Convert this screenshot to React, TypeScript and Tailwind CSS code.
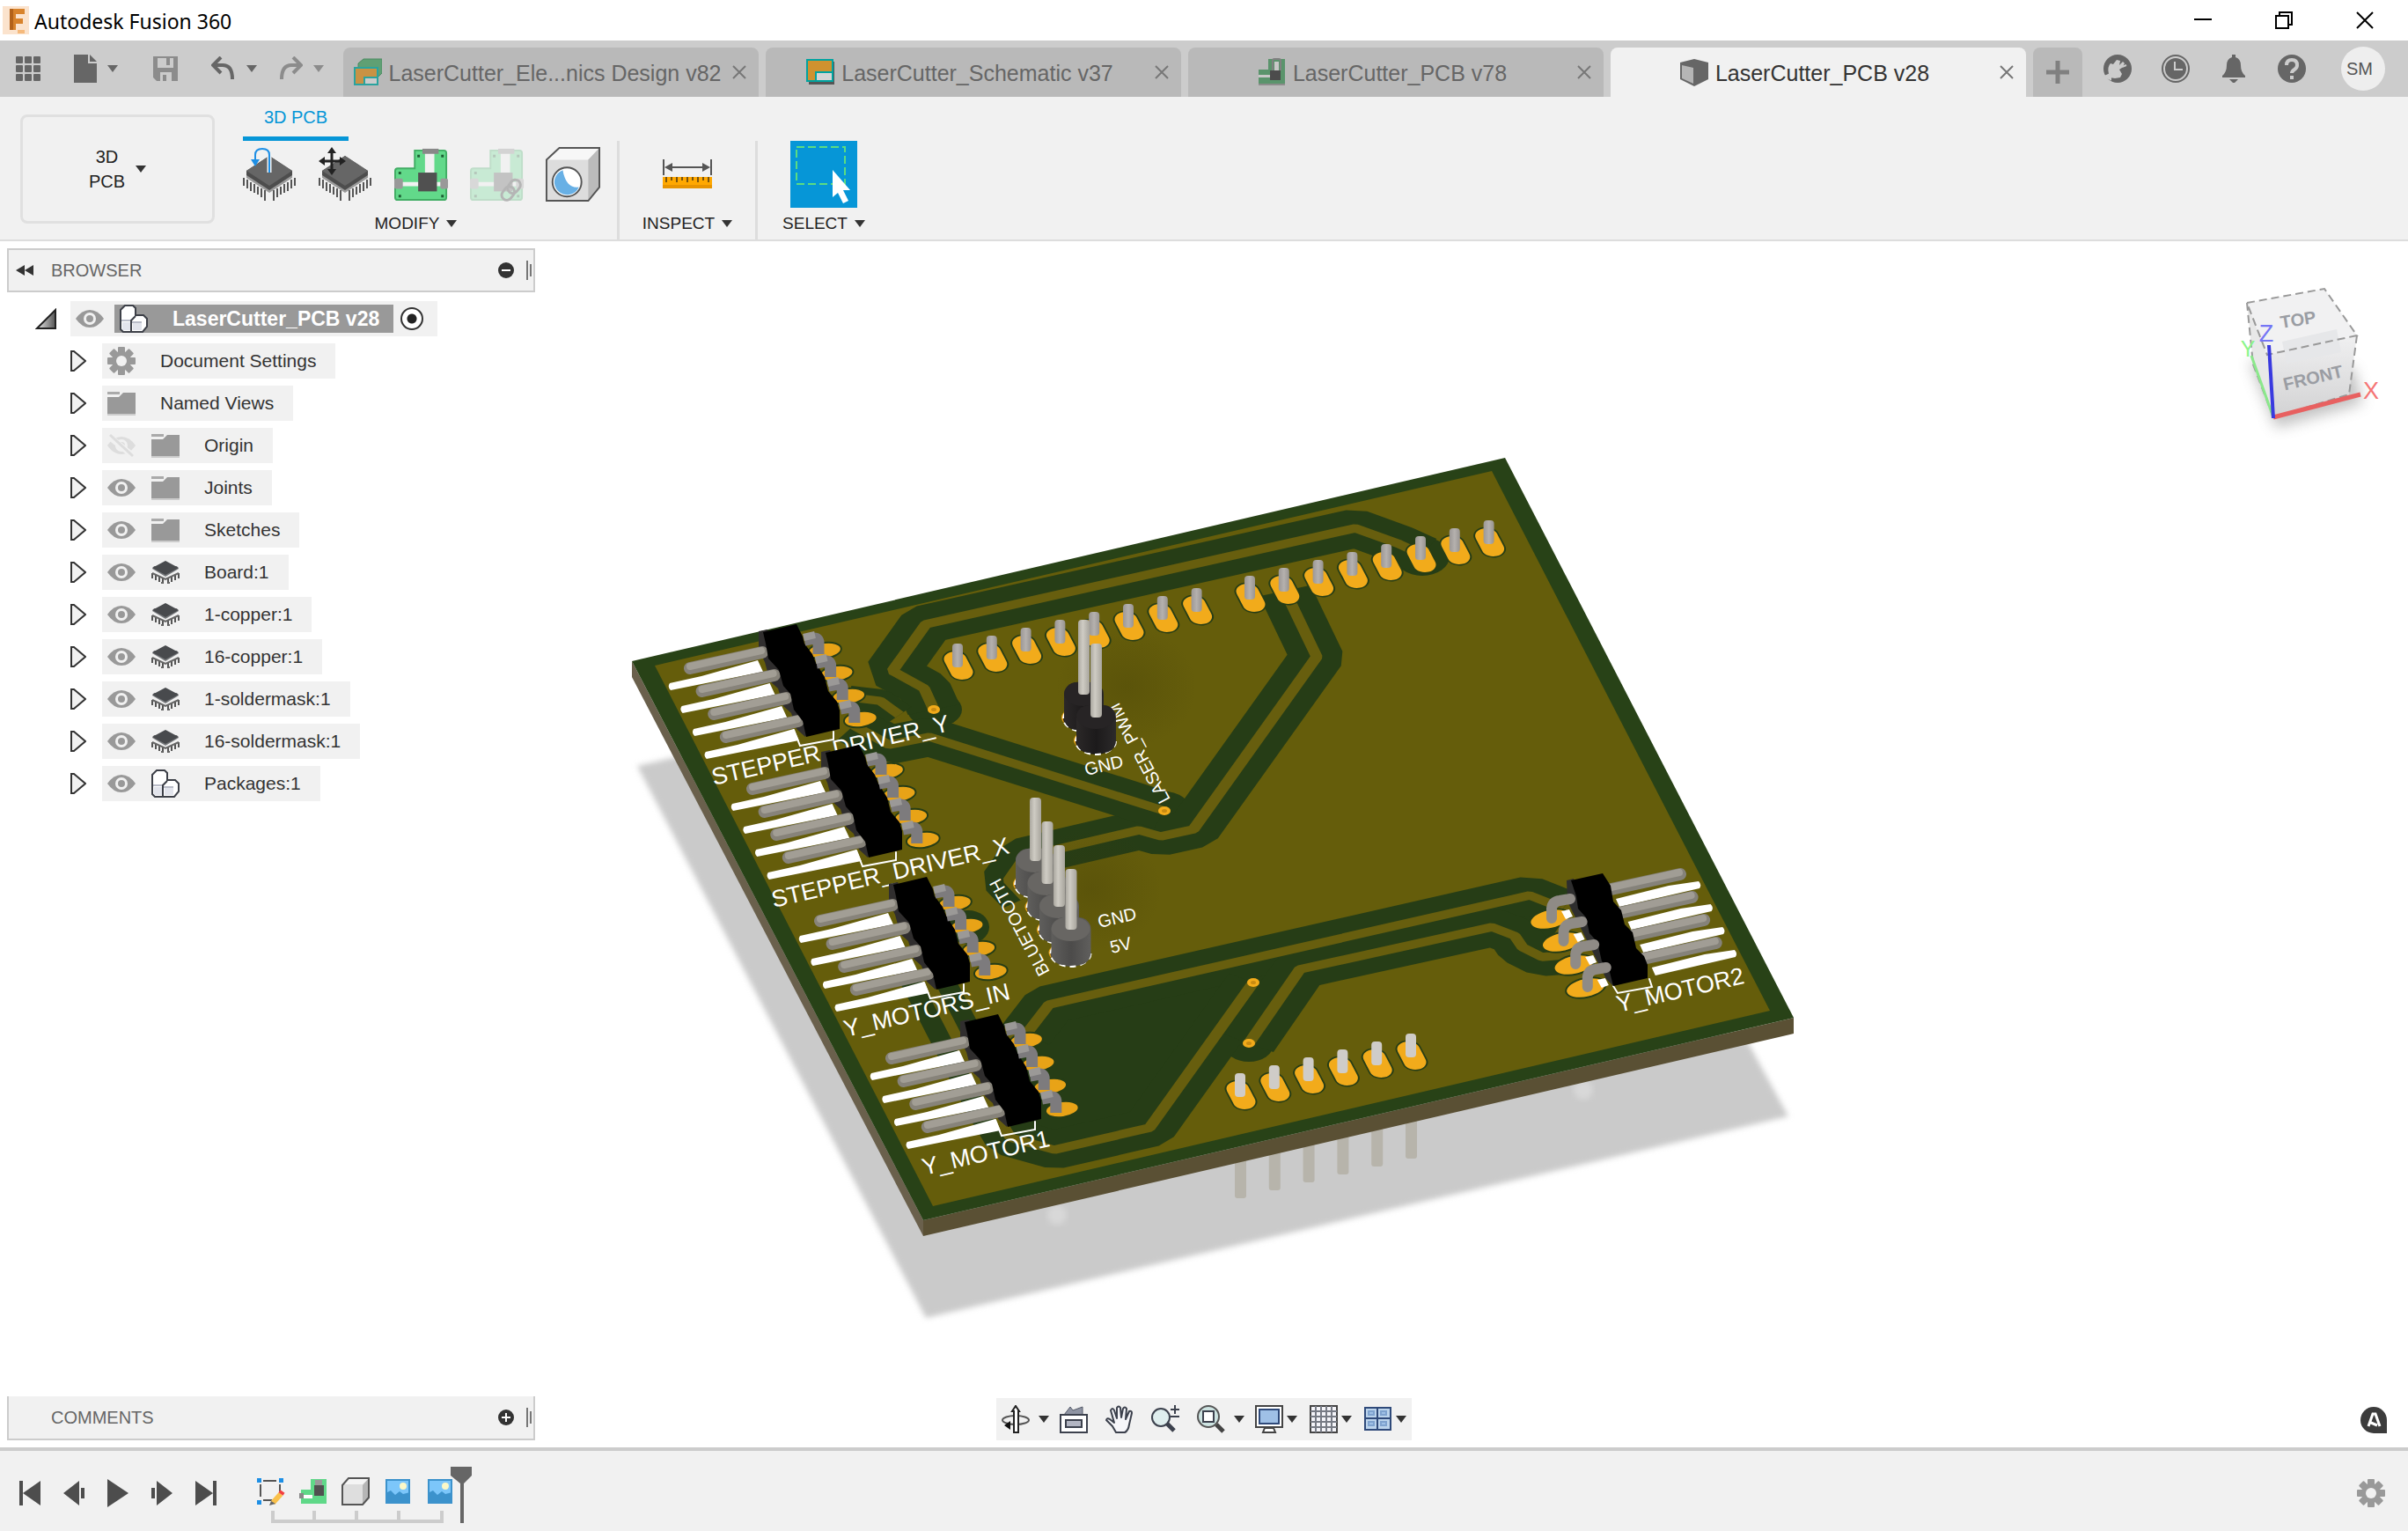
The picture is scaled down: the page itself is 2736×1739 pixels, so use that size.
import React from 'react';

type Pt = [number, number];

const TABS = [
  { id: 'design', title: 'LaserCutter_Ele...nics Design v82', active: false },
  { id: 'schematic', title: 'LaserCutter_Schematic v37', active: false },
  { id: 'board', title: 'LaserCutter_PCB v78', active: false },
  { id: 'cube', title: 'LaserCutter_PCB v28', active: true },
];

const TREE = [
  { label: 'Document Settings', eye: 'none', icon: 'gear' },
  { label: 'Named Views', eye: 'none', icon: 'folder' },
  { label: 'Origin', eye: 'off', icon: 'folder' },
  { label: 'Joints', eye: 'on', icon: 'folder' },
  { label: 'Sketches', eye: 'on', icon: 'folder' },
  { label: 'Board:1', eye: 'on', icon: 'chip' },
  { label: '1-copper:1', eye: 'on', icon: 'chip' },
  { label: '16-copper:1', eye: 'on', icon: 'chip' },
  { label: '1-soldermask:1', eye: 'on', icon: 'chip' },
  { label: '16-soldermask:1', eye: 'on', icon: 'chip' },
  { label: 'Packages:1', eye: 'on', icon: 'blocks' },
];

/* ---------- small icons ---------- */

const Caret = ({ className = 'text-[#333333]' }: { className?: string }) => (
  <svg className={`h-2 w-3 shrink-0 ${className}`} viewBox="0 0 12 8"><path d="M0 0h12L6 8z" fill="currentColor" /></svg>
);

const GearIcon = () => (
  <svg className="size-8 shrink-0 text-[#999999]" viewBox="0 0 32 32">
    {[0, 45, 90, 135].map((a) => (
      <rect key={a} x="12" y="0" width="8" height="32" rx="1" fill="currentColor" transform={`rotate(${a} 16 16)`} />
    ))}
    <circle cx="16" cy="16" r="11" fill="currentColor" />
    <circle cx="16" cy="16" r="6" fill="#f1f1f1" />
  </svg>
);

const FolderIcon = () => (
  <svg className="size-8 shrink-0" viewBox="0 0 32 32">
    <path d="M0 3h14v3H0z" fill="#aaaaaa" />
    <path d="M0 9h13l5-5h14v24H0z" fill="#999999" />
    <path d="M0 28h32v2H0z" fill="#cccccc" />
  </svg>
);

const EyeIcon = ({ off = false }: { off?: boolean }) => (
  <svg className={off ? 'size-8 shrink-0 text-[#dddddd]' : 'size-8 shrink-0 text-[#999999]'} viewBox="0 0 32 32">
    <path d="M0 16Q7 6 16 6t16 10q-7 10-16 10T0 16z" fill="currentColor" />
    <circle cx="16" cy="16" r="7" fill="#f1f1f1" />
    <circle cx="16" cy="16" r="4" fill="currentColor" />
    {off && <path d="M1 5l27 22" stroke="#f1f1f1" strokeWidth="7" />}
    {off && <path d="M3 4l26 24" stroke="currentColor" strokeWidth="3" />}
  </svg>
);

const BlocksIcon = () => (
  <svg className="size-8 shrink-0" viewBox="0 0 32 32">
    <path d="M1 6l5-5h9l3 3v8h9l4 4v9l-5 6H4l-3-3z" fill="#ffffff" stroke="#3d4048" strokeWidth="2" />
    <path d="M2 18h11M13 20h12" stroke="#b9bcc8" strokeWidth="2" fill="none" />
    <path d="M3 20h9v9H3zM15 21h10v8H15z" fill="#e2e4ec" />
    <path d="M13 30V18l5-5" stroke="#3d4048" strokeWidth="2" fill="none" />
  </svg>
);

const ChipShape = () => (
  <g>
    <path d="M1 36v9M5 38v10M9 41v10M13 43v10M17 46v9M21 48v10M25 50v12M35 50v12M39 48v10M43 46v9M47 43v10M51 41v10M55 38v10M59 36v9" stroke="#555555" strokeWidth="2" />
    <path d="M4 31l26 17 26-17v5L30 53 4 36z" fill="#9a9a9a" />
    <path d="M4 28L30 11l26 17v5L30 50 4 33z" fill="#4d4d4d" />
    <path d="M4 28L30 11l26 17-26 17z" fill="#666666" />
  </g>
);

const SmallChip = () => (
  <svg className="size-8 shrink-0" viewBox="0 0 32 32">
    <path d="M1 17v6M5 19v6M9 21v6M13 23v6M19 23v6M23 21v6M27 19v6M31 17v6" stroke="#555555" strokeWidth="2" />
    <path d="M1 17l15 7 15-7M13 28h-2M19 28h2" stroke="#666666" strokeWidth="2" fill="none" />
    <path d="M1 12l15 9 15-9-2-3H3z" fill="#77797c" />
    <path d="M1 11L16 3l15 8-15 8z" fill="#484a4d" />
  </svg>
);

const BoardShape = () => (
  <g>
    <path d="M24 4h34q3 0 3 3v52q0 3-3 3H4q-3 0-3-3V28q0-3 3-3h20z" fill="#62d98a" stroke="#41ad64" strokeWidth="2" />
    <path d="M36 6h11v24H36zM4 41h56v5H4z" fill="#f1f1f1" />
    <path d="M33 2h19v6H33z" fill="#888888" />
    <rect x="0" y="37" width="10" height="12" rx="2" fill="#999999" />
    <rect x="54" y="37" width="9" height="12" rx="2" fill="#999999" />
    <path d="M28 30h22v22H28z" fill="#505050" />
    <path d="M27 9h3v3h-3zM55 9h3v3h-3zM5 29h3v3H5zM5 56h3v3H5zM55 56h3v3h-3z" fill="#1e5e34" />
  </g>
);

const TabIcon = ({ id }: { id: string }) => (
  <svg className="size-8 shrink-0" viewBox="0 0 32 32">
    {id === 'design' && (
      <g>
        <path d="M5 6l6-5h21v16l-5 5H5z" fill="#5fa074" stroke="#4a8a60" />
        <path d="M1 11h26v19H1z" fill="#c99244" stroke="#2aa39f" strokeWidth="2" />
        <path d="M12 22h15v8H12z" fill="#cccccc" stroke="#2aa39f" strokeWidth="2" />
      </g>
    )}
    {id === 'schematic' && (
      <g>
        <path d="M3 4h29v26H3z" fill="#555555" />
        <path d="M1 2h29v24H1z" fill="#cf922f" stroke="#00a3a0" strokeWidth="2" />
        <path d="M11 16h19v10H11z" fill="#d5d5d5" stroke="#00a3a0" strokeWidth="2" />
      </g>
    )}
    {id === 'board' && (
      <g>
        <path d="M12 1h19v29H1V13h11z" fill="#5a946c" />
        <path d="M19 4h5v10h-5z" fill="#c8c8c8" />
        <path d="M17 14V3q0-2 2-2h5q2 0 2 2v11" fill="none" stroke="#808080" strokeWidth="2" />
        <path d="M1 19h14v3H1z" fill="#c8c8c8" />
        <path d="M14 14h12v11H14z" fill="#4c4c4c" />
        <path d="M1 30h30" stroke="#8c8c8c" strokeWidth="2" />
      </g>
    )}
    {id === 'cube' && (
      <g>
        <path d="M0 5l16-4 16 4v19l-16 8L0 24z" fill="#666666" />
        <path d="M2 8l13 3v18L2 23z" fill="#b5b5b5" />
      </g>
    )}
  </svg>
);

const CloseIcon = () => (
  <svg className="size-[18px]" viewBox="0 0 18 18"><path d="M2 2l14 14M16 2L2 16" stroke="#777777" strokeWidth="2" /></svg>
);

/* ---------- window chrome ---------- */

const TitleBar = () => (
  <header className="flex h-[46px] items-center bg-white pl-[3px]">
    <svg className="h-8 w-[30px]" viewBox="0 0 30 32">
      <rect width="30" height="32" fill="#fbe3cd" />
      <path d="M8 3h17v6H15v5h8v6h-8v7H8z" fill="#d8832c" />
      <path d="M8 3h4v24H8z" fill="#b3621a" />
      <path d="M17 27h8v4h-8z" fill="#f5b97b" />
    </svg>
    <h1 className="ml-[6px] flex-1 pt-[2px] font-['Noto_Sans',sans-serif] text-[23px] text-black">Autodesk Fusion 360</h1>
    <button aria-label="Minimize" className="flex h-full w-[92px] items-center justify-center">
      <svg className="size-5" viewBox="0 0 20 20"><path d="M0 9h20" stroke="#000" strokeWidth="2" /></svg>
    </button>
    <button aria-label="Restore" className="flex h-full w-[92px] items-center justify-center">
      <svg className="size-5" viewBox="0 0 20 20"><path d="M1 5h14v14H1zM5 5V1h14v14h-4" stroke="#000" strokeWidth="2" fill="none" /></svg>
    </button>
    <button aria-label="Close" className="mr-[3px] flex h-full w-[92px] items-center justify-center">
      <svg className="size-5" viewBox="0 0 20 20"><path d="M1 1l18 18M19 1L1 19" stroke="#000" strokeWidth="2" /></svg>
    </button>
  </header>
);

const TabBar = () => (
  <div className="flex h-16 bg-[#cccccc]">
    <div className="flex w-[390px] shrink-0 items-center pl-[18px] text-[#666666]">
      <button aria-label="Data panel">
        <svg className="size-7" viewBox="0 0 28 28" fill="currentColor">
          {[0, 10, 20].map((y) => [0, 10, 20].map((x) => <rect key={`${x}-${y}`} x={x} y={y} width="8" height="8" rx="1" />))}
        </svg>
      </button>
      <button aria-label="File" className="ml-[38px] flex items-center gap-3">
        <svg className="h-8 w-[26px]" viewBox="0 0 26 32" fill="currentColor"><path d="M0 0h16v10h10v22H0zM18 0l8 8h-8z" /></svg>
        <Caret className="text-[#666666]" />
      </button>
      <button aria-label="Save" className="ml-[40px] text-[#8c8c8c]">
        <svg className="size-7" viewBox="0 0 28 28">
          <path d="M0 0h28v28H4l-4-4z" fill="currentColor" />
          <path d="M5 2h18v11H5zM8 18h13v10H8z" fill="#cccccc" />
          <path d="M15 2h4v8h-4zM11 21h4v7h-4z" fill="currentColor" />
        </svg>
      </button>
      <button aria-label="Undo" className="ml-[38px] flex items-center gap-3">
        <svg className="size-7" viewBox="0 0 28 28" fill="none"><path d="M2 10h11q11 0 11 16" stroke="currentColor" strokeWidth="4" /><path d="M11 1L2 10l9 9" stroke="currentColor" strokeWidth="4" /></svg>
        <Caret className="text-[#666666]" />
      </button>
      <button aria-label="Redo" className="ml-6 flex items-center gap-3 text-[#8c8c8c]">
        <svg className="size-7" viewBox="0 0 28 28" fill="none"><path d="M26 10H15Q4 10 4 26" stroke="currentColor" strokeWidth="4" /><path d="M17 1l9 9-9 9" stroke="currentColor" strokeWidth="4" /></svg>
        <Caret className="text-[#8c8c8c]" />
      </button>
    </div>

    <nav className="flex min-w-0 flex-1 gap-2 pt-2">
      {TABS.map((tab) => (
        <div key={tab.id} className={`flex min-w-0 flex-1 items-center rounded-t-lg ${tab.active ? 'bg-[#f1f1f1] text-[#333333]' : 'bg-[#b9b9b9] text-[#666666]'}`}>
          <button className="flex min-w-0 flex-1 items-center justify-center gap-2 whitespace-nowrap text-[25px]">
            <TabIcon id={tab.id} />
            <span className="pt-[3px]">{tab.title}</span>
          </button>
          <button aria-label={`Close ${tab.title}`} className="mr-[13px]"><CloseIcon /></button>
        </div>
      ))}
    </nav>

    <div className="flex w-[434px] shrink-0 pl-2">
      <button aria-label="New tab" className="mt-2 flex w-14 items-center justify-center rounded-t-lg bg-[#b9b9b9]">
        <svg className="size-[26px]" viewBox="0 0 26 26"><path d="M13 0v26M0 13h26" stroke="#808080" strokeWidth="5" /></svg>
      </button>
      <div className="ml-6 flex items-center gap-[34px] text-[#666666]">
        <button aria-label="Extensions">
          <svg className="size-8" viewBox="0 0 32 32">
            <circle cx="16" cy="16" r="16" fill="currentColor" />
            <path d="M6 22q-2-8 2-12l3 1 4-5 4 1-1 5 4-4 2 2-3 5-3 2 3 5-2 4-6 1-6-1z" fill="#cccccc" />
            <path d="M1 25l7 3v-6zM21 14l5-2" fill="#cccccc" stroke="#cccccc" strokeWidth="2" />
          </svg>
        </button>
        <button aria-label="Job status">
          <svg className="size-8" viewBox="0 0 32 32">
            <circle cx="16" cy="16" r="15" fill="none" stroke="currentColor" strokeWidth="2" />
            <circle cx="16" cy="16" r="12" fill="currentColor" />
            <path d="M15 8v9h9" stroke="#cccccc" strokeWidth="2" fill="none" />
          </svg>
        </button>
        <button aria-label="Notifications">
          <svg className="size-8" viewBox="0 0 32 32" fill="currentColor"><path d="M14 0h4v3q6 2 6 9 0 8 5 12v2H3v-2q5-4 5-12 0-7 6-9zM11 28h10l-4 4h-2z" /></svg>
        </button>
        <button aria-label="Help">
          <svg className="size-8" viewBox="0 0 32 32">
            <circle cx="16" cy="16" r="16" fill="currentColor" />
            <path d="M10 12q0-6 6-6t6 6q0 3-3 5t-3 4" stroke="#cccccc" strokeWidth="4" fill="none" />
            <path d="M14 24h4v4h-4z" fill="#cccccc" />
          </svg>
        </button>
        <button className="ml-[6px] size-[50px] rounded-full bg-[#eeeeee] pr-2 text-[20px] text-[#555555]">SM</button>
      </div>
    </div>
  </div>
);

const PanelLabel = ({ children }: { children: React.ReactNode }) => (
  <button className="flex h-9 items-center justify-center gap-2 text-[19px] text-[#222222]">{children}<Caret /></button>
);

const Ribbon = () => (
  <section className="flex h-[164px] border-b-2 border-[#dddddd] bg-[#f1f1f1] pl-[23px]">
    <button className="mt-5 flex h-[124px] w-[221px] shrink-0 items-center justify-center gap-3 rounded-lg border-[3px] border-[#e0e0e0] text-[20px] leading-7 text-[#222222]">
      <span>3D<br />PCB</span>
      <Caret />
    </button>
    <div className="ml-8">
      <button className="block h-[50px] w-[120px] border-b-[5px] border-[#0696d7] text-[20px] text-[#0696d7]">3D PCB</button>
      <div className="flex">
        <div className="flex w-[425px] flex-col">
          <div className="flex h-[76px] items-center gap-6">
            <button aria-label="Push package">
              <svg className="h-16 w-[62px]" viewBox="0 0 62 64">
                <ChipShape />
                <path d="M30 30V10q0-7-8-7t-8 7v7" stroke="#f1f1f1" strokeWidth="5" fill="none" />
                <path d="M30 30V10q0-7-8-7t-8 7v7" stroke="#1e8fe5" strokeWidth="2" fill="none" />
                <path d="M9 15h10l-5 8z" fill="#1e8fe5" />
              </svg>
            </button>
            <button aria-label="Move package">
              <svg className="h-16 w-[62px]" viewBox="0 0 62 64">
                <ChipShape />
                <path d="M15 4v26M3 17h24" stroke="#222222" strokeWidth="3" />
                <path d="M15 1l5 7H10zM15 33l5-7H10zM0 17l7-5v10zM31 17l-7-5v10z" fill="#222222" />
              </svg>
            </button>
            <button aria-label="Push to board"><svg className="h-16 w-[62px]" viewBox="0 0 64 64"><BoardShape /></svg></button>
            <button aria-label="Link board" disabled>
              <svg className="h-16 w-[62px]" viewBox="0 0 64 64">
                <g opacity="0.28"><BoardShape /></g>
                <g fill="none" stroke="#b5b5b5" strokeWidth="3">
                  <rect x="46" y="38" width="12" height="17" rx="6" transform="rotate(38 52 46)" />
                  <rect x="39" y="46" width="12" height="17" rx="6" transform="rotate(38 45 54)" />
                </g>
              </svg>
            </button>
            <button aria-label="Appearance">
              <svg className="h-16 w-[62px]" viewBox="0 0 64 64">
                <path d="M1 15L16 1h47v46L50 63H1z" fill="#dddddd" />
                <path d="M1 15L16 1h47L50 15z" fill="#f7f7f7" />
                <path d="M50 15L63 1v46L50 63z" fill="#bbbbbb" />
                <path d="M1 15L16 1h47v46L50 63H1z" fill="none" stroke="#555555" strokeWidth="2" />
                <circle cx="25" cy="41" r="17" fill="#ffffff" stroke="#555555" strokeWidth="2" />
                <path d="M20 27a15 15 0 1 0 19 20q-15 2-19-20z" fill="#68b0e5" />
              </svg>
            </button>
          </div>
          <div className="mr-8 flex justify-center"><PanelLabel>MODIFY</PanelLabel></div>
        </div>
        <div className="flex w-[160px] flex-col border-x-[3px] border-[#dddddd]">
          <button aria-label="Measure" className="flex h-[76px] items-center justify-center">
            <svg className="h-16 w-14" viewBox="0 0 56 64">
              <path d="M1 15v18M55 15v18M5 24h46" stroke="#555555" strokeWidth="2" />
              <path d="M2 24l9-5v10zM54 24l-9-5v10z" fill="#555555" />
              <path d="M0 35h56v13H0z" fill="#ffa800" />
              <path d="M0 44h56v4H0z" fill="#e89400" />
              <path d="M4 35v6M10 35v4M16 35v6M22 35v4M28 35v6M34 35v4M40 35v6M46 35v4M52 35v6" stroke="#77520c" strokeWidth="2" />
            </svg>
          </button>
          <PanelLabel>INSPECT</PanelLabel>
        </div>
        <div className="flex w-[150px] flex-col items-center">
          <button aria-label="Select" className="size-[76px] bg-[#0696d7]">
            <svg viewBox="0 0 76 76">
              <path d="M7 7h55v42H7z" fill="none" stroke="#5bdc82" strokeWidth="2" strokeDasharray="9 4" />
              <path d="M48 33v31l6-5 6 12 6-3-6-12h8z" fill="#ffffff" />
            </svg>
          </button>
          <PanelLabel>SELECT</PanelLabel>
        </div>
      </div>
    </div>
  </section>
);

/* ---------- board drawing ---------- */

// Board plane: u runs along the long edge, v along the left edge.
const U: Pt = [1.2605, -0.2935];
const V: Pt = [0.4649, 0.8919];
const PLANE = `matrix(${U[0]} ${U[1]} ${V[0]} ${V[1]} 0 0)`;

const toPlane = ([x, y]: Pt): Pt => {
  const det = U[0] * V[1] - V[0] * U[1];
  return [(x * V[1] - y * V[0]) / det, (y * U[0] - x * U[1]) / det];
};
const line = (pts: Pt[]) => pts.map((p) => toPlane(p).map((n) => n.toFixed(1)).join(',')).join(' ');

const TRACES: Pt[][] = [
  [[1616, 630], [1590, 618], [1540, 600], [1052, 709], [1014, 762], [1050, 782], [1061, 806]],
  [[1460, 671], [1496, 746], [1356, 942], [1319, 950], [1294, 943], [1165, 973], [1146, 1000], [1165, 1020]],
  [[1323, 921], [1056, 837], [1010, 846], [970, 824]],
  [[965, 792], [1000, 796], [1022, 812]],
  [[1776, 1032], [1738, 1017], [1192, 1141], [1165, 1176]],
  [[1424, 1116], [1306, 1281], [1198, 1306], [1148, 1292], [1130, 1262], [1052, 1110]],
  [[1419, 1185], [1477, 1101], [1695, 1053], [1721, 1063], [1730, 1076], [1752, 1087], [1790, 1084]],
];

const VIAS: Pt[] = [[1061, 806], [1323, 921], [1424, 1116], [1419, 1185]];

const row = (x: number, y: number, n: number): Pt[] => Array.from({ length: n }, (_, i) => [x + i * 38.8, y - i * 9]);
const TOP_PADS = [...row(1088, 756, 8), ...row(1420, 679, 8)];
const BOTTOM_PADS = row(1409, 1244, 6);

const Pad = ({ at, pin }: { at: Pt; pin: string }) => {
  const [u, v] = toPlane([at[0] + 1, at[1]]);
  return (
    <g>
      <g transform={PLANE} strokeLinecap="round">
        <path d={`M${u} ${v - 8}v16`} stroke="#263d16" strokeWidth="22" />
        <path d={`M${u} ${v - 8}v16`} stroke="#f2ab1b" strokeWidth="19" />
      </g>
      <rect x={at[0] - 6} y={at[1] - 25} width="12" height="27" rx="4" fill={pin} />
    </g>
  );
};

const STEPS = [0, 1, 2, 3];

// Four-way right-angle header on the left edge, pins pointing outwards
const LeftHeader = ({ dx, dy }: { dx: number; dy: number }) => (
  <g transform={`translate(${dx} ${dy})`} strokeLinecap="round">
    {STEPS.map((i) => (
      <g key={i} transform={`translate(${i * 13.6} ${i * 26})`}>
        <ellipse cx="937" cy="739" rx="20" ry="10" fill="#263d16" transform="rotate(-8 937 739)" />
        <ellipse cx="937" cy="739" rx="18" ry="8" fill="#e8a317" transform="rotate(-8 937 739)" />
        <path d="M762 784q-4-4-1-8l36-8 64-18 6 13z" fill="#ffffff" />
      </g>
    ))}
    <path d="M902 829l7 18 38-7v-9" stroke="#ffffff" strokeWidth="2" fill="none" />
    <path d="M862 717l10-2 50 110-7 12-10-9-6-18-9-8-6-20-9-8-6-22-7-14z" fill="#302e2e" />
    {STEPS.map((i) => (
      <g key={i} transform={`translate(${i * 13.6} ${i * 26})`}>
        <path d="M784 759l82-18" stroke="#87837a" strokeWidth="14" />
        <path d="M784 757l81-18" stroke="#a29e95" strokeWidth="8" />
      </g>
    ))}
    <path d="M867 718l38-9 7 14 2 8 9 12 4 10 10 16 4 16 10 12 3 10v21l-38 9-4-18-10-13-4-18-8-9-5-18-12-13-3-17z" fill="#000000" />
    {STEPS.map((i) => (
      <g key={i} transform={`translate(${i * 13.6} ${i * 26})`} fill="none" strokeLinecap="butt" strokeLinejoin="round">
        <path d="M914 727l11-2q5 0 5 5v13" stroke="#7d7b7d" strokeWidth="13" />
        <path d="M913 724l13-3" stroke="#9b9997" strokeWidth="8" />
      </g>
    ))}
  </g>
);

const RightHeader = () => (
  <g strokeLinecap="round">
    {STEPS.map((i) => (
      <g key={i} transform={`translate(${i * 13.6} ${i * 26})`}>
        <ellipse cx="1761" cy="1044" rx="24" ry="12" fill="#263d16" transform="rotate(-12 1761 1044)" />
        <ellipse cx="1761" cy="1044" rx="22" ry="10" fill="#f2ab1b" transform="rotate(-12 1761 1044)" />
        <path d="M1774 1035l9-2 4 8-8 3z" fill="#ffffff" />
        <path d="M1840 1030l-4-9 60-15 34-5q4 4 1 8z" fill="#ffffff" />
      </g>
    ))}
    <path d="M1833 1120l5 8 39-7-3-9" stroke="#ffffff" strokeWidth="2" fill="none" />
    <path d="M1780 1000l8-2 45 104v18l-8-8-44-88z" fill="#2e2e2e" />
    {STEPS.map((i) => (
      <g key={i} transform={`translate(${i * 13.6} ${i * 26})`}>
        <path d="M1826 1011l83-18" stroke="#85827a" strokeWidth="14" />
        <path d="M1826 1009l82-18" stroke="#a19d95" strokeWidth="8" />
      </g>
    ))}
    <path d="M1785 1000l36-8 9 14 3 18 9 10 4 16 9 9 4 18 9 9 4 10v15l-39 9-5-20-8-8-5-22-9-10-4-18-9-10-2-14z" fill="#000000" />
    {STEPS.map((i) => (
      <path key={i} transform={`translate(${i * 13.6} ${i * 26})`} d="M1784 1021l-12 2q-8 1-9 9v11" stroke="#8f8b86" strokeWidth="12" fill="none" />
    ))}
  </g>
);

// Upright header post: cx is the pin centre, base is where the pin meets the body
const Post = ({ cx, top, base, dark }: { cx: number; top: number; base: number; dark: boolean }) => (
  <g>
    <ellipse cx={cx - 4} cy={base + 26} rx="21" ry="12" fill="#e8a317" />
    <ellipse cx={cx} cy={base + 27} rx="23" ry="15" fill={dark ? '#1a1919' : '#504f4e'} stroke="#ffffff" strokeWidth="2" strokeDasharray="7 5" />
    <rect x={cx - 22} y={base - 14} width="45" height="54" rx="14" fill={dark ? 'url(#bodyDark)' : 'url(#bodyGrey)'} />
    <ellipse cx={cx} cy={base - 1} rx="22" ry="14" fill={dark ? '#272425' : '#686663'} />
    <rect x={cx - 6} y={top} width="13" height={base - top} rx="4" fill="url(#pin)" />
  </g>
);

const SILK = [
  { text: 'STEPPER_DRIVER_Y', x: 811, y: 892, angle: -13, size: 27 },
  { text: 'STEPPER_DRIVER_X', x: 879, y: 1031, angle: -13, size: 27 },
  { text: 'Y_MOTORS_IN', x: 961, y: 1178, angle: -13, size: 27 },
  { text: 'Y_MOTOR1', x: 1050, y: 1335, angle: -13, size: 27 },
  { text: 'Y_MOTOR2', x: 1839, y: 1150, angle: -13, size: 27 },
  { text: 'GND', x: 1234, y: 881, angle: -13, size: 20 },
  { text: 'GND', x: 1249, y: 1054, angle: -13, size: 20 },
  { text: '5V', x: 1263, y: 1083, angle: -13, size: 20 },
  { text: 'LASER_PWM', x: 1330, y: 908, angle: -118, size: 20 },
  { text: 'BLUETOOTH', x: 1193, y: 1104, angle: -118, size: 20 },
];

const ViewCube = () => (
  <g>
    <path d="M2556 410l30 76 98-28-10-40z" fill="#777777" opacity="0.45" filter="url(#soft)" />
    <path d="M2553 344l23 59 7 71-23-60z" fill="#e8e8e8" />
    <path d="M2553 344l88-16 37 53-102 22z" fill="#f1f1f2" />
    <path d="M2576 403l102-22-9 67-86 26z" fill="url(#cubeFront)" />
    <path d="M2593 388l62-14 5 26-62 13z" fill="#e6e7e9" />
    <path d="M2553 344l88-16 37 53-102 22zM2678 381l-9 67-86 26M2553 344l7 70 23 60" fill="none" stroke="#999999" strokeWidth="2" strokeDasharray="9 5" />
    <path d="M2558 404l25 70" stroke="#8be88b" strokeWidth="3" />
    <path d="M2583 474l99-26" stroke="#e86060" strokeWidth="5" />
    <path d="M2578 392l5 83" stroke="#3a3adf" strokeWidth="4" />
    <g textAnchor="middle" fontFamily="Liberation Sans, sans-serif">
      <text x="2611" y="370" fontSize="20" fontWeight="bold" fill="#9a9da3" transform="rotate(-9 2611 363)">TOP</text>
      <text x="2628" y="436" fontSize="20" fontWeight="bold" fill="#9a9da3" transform="rotate(-13 2628 429)">FRONT</text>
      <text x="2575" y="388" fontSize="27" fill="#7575f5">Z</text>
      <text x="2554" y="405" fontSize="25" fill="#8cf58c">Y</text>
      <text x="2694" y="453" fontSize="27" fill="#f57575">X</text>
    </g>
  </g>
);

const Scene = () => (
  <svg className="absolute inset-0 size-full" viewBox="0 274 2736 1370" role="img" aria-label="3D view of the laser cutter board">
    <defs>
      <filter id="blur"><feGaussianBlur stdDeviation="3" /></filter>
      <filter id="soft" x="-30%" y="-30%" width="160%" height="160%"><feGaussianBlur stdDeviation="8" /></filter>
      <linearGradient id="pin"><stop offset="0" stopColor="#aaa79f" /><stop offset="0.4" stopColor="#cfccc4" /><stop offset="1" stopColor="#a8a59d" /></linearGradient>
      <linearGradient id="shortPin"><stop offset="0" stopColor="#9b9795" /><stop offset="0.5" stopColor="#b5b1ae" /><stop offset="1" stopColor="#989491" /></linearGradient>
      <linearGradient id="bodyDark"><stop offset="0" stopColor="#2b2828" /><stop offset="0.5" stopColor="#1c1a1b" /><stop offset="1" stopColor="#2c2a2a" /></linearGradient>
      <linearGradient id="bodyGrey"><stop offset="0" stopColor="#5f5e5c" /><stop offset="0.5" stopColor="#4c4b4a" /><stop offset="1" stopColor="#605f5d" /></linearGradient>
      <linearGradient id="cubeFront" x1="0" y1="0" x2="0" y2="1"><stop offset="0" stopColor="#f0f0f1" /><stop offset="1" stopColor="#d2d2d3" /></linearGradient>
      <radialGradient id="shade"><stop offset="0" stopColor="#3d3806" stopOpacity="0.25" /><stop offset="1" stopColor="#3d3806" stopOpacity="0" /></radialGradient>
    </defs>

    <path d="M724 870L900 830 1986 1184l46 84L1052 1497z" fill="#cacaca" filter="url(#blur)" />
    <circle cx="1799" cy="1238" r="11" fill="#d8d8d8" filter="url(#blur)" />
    <circle cx="1201" cy="1380" r="11" fill="#d8d8d8" filter="url(#blur)" />

    {BOTTOM_PADS.map(([x, y]) => <rect key={x} x={x - 6} y={y + 60} width="13" height="57" rx="3" fill="#b7b4ab" />)}

    <path d="M718 751v18l331 635v-18z" fill="#6a604c" />
    <path d="M1049 1386v18l989-230v-18z" fill="#5a5034" />
    <path d="M718 751L1710 520 2038 1156 1049 1386z" fill="#284217" />
    <path d="M744 756L1695 535 2011 1148 1060 1370z" fill="#655d0b" />

    <g fill="#263d16">
      <path d="M1192 1136L1480 1080 1424 1116 1302 1281 1198 1310 1150 1290 1150 1180z" />
      <path d="M1380 1110L1738 1026 1780 1040 1750 1084 1695 1050 1477 1102 1410 1180z" />
      <ellipse cx="1616" cy="632" rx="31" ry="22" />
      <ellipse cx="1323" cy="921" rx="30" ry="22" />
      <ellipse cx="1419" cy="1186" rx="28" ry="20" />
      <ellipse cx="1100" cy="1053" rx="24" ry="19" />
      <ellipse cx="1062" cy="806" rx="31" ry="20" />
    </g>
    <g transform={PLANE} fill="none" strokeLinejoin="bevel">
      {TRACES.map((t, i) => <polyline key={i} points={line(t)} stroke="#263d16" strokeWidth={i === 3 ? 28 : 46} />)}
      {TRACES.map((t, i) => <polyline key={i} points={line(t)} stroke="#675e0e" strokeWidth="10" />)}
    </g>

    <ellipse cx="1280" cy="780" rx="80" ry="70" fill="url(#shade)" />
    <ellipse cx="1240" cy="1010" rx="80" ry="70" fill="url(#shade)" />

    {VIAS.map(([x, y]) => (
      <g key={y}>
        <ellipse cx={x} cy={y} rx="7" ry="5" fill="#f2ab1b" />
        <ellipse cx={x} cy={y} rx="3" ry="2" fill="#c98b12" />
      </g>
    ))}
    {TOP_PADS.map((p) => <Pad key={p[0]} at={p} pin="url(#shortPin)" />)}
    {BOTTOM_PADS.map((p) => <Pad key={p[0]} at={p} pin="#cfccc8" />)}

    <g fill="#ffffff" fontFamily="Liberation Sans, sans-serif">
      {SILK.map((s, i) => (
        <text key={i} fontSize={s.size} transform={`translate(${s.x} ${s.y}) rotate(${s.angle})`}>{s.text}</text>
      ))}
    </g>

    <LeftHeader dx={0} dy={0} />
    <LeftHeader dx={71} dy={137} />
    <LeftHeader dx={148} dy={287} />
    <LeftHeader dx={229} dy={443} />
    <RightHeader />

    <Post cx={1231} top={704} base={789} dark />
    <Post cx={1245} top={731} base={815} dark />
    {STEPS.map((i) => <Post key={i} cx={1176 + i * 13.5} top={906 + i * 27} base={978 + i * 26} dark={false} />)}

    <ViewCube />
  </svg>
);

/* ---------- side panels ---------- */

const RoundToggle = ({ plus = false }: { plus?: boolean }) => (
  <svg className="size-[18px]" viewBox="0 0 18 18">
    <circle cx="9" cy="9" r="9" fill="#333333" />
    <path d={plus ? 'M4 9h10M9 4v10' : 'M4 9h10'} stroke="#ffffff" strokeWidth="2" />
  </svg>
);

const Grip = () => (
  <svg className="ml-[14px] h-[22px] w-2" viewBox="0 0 8 22"><path d="M1 0v22M5 4v14" stroke="#777777" strokeWidth="2" /></svg>
);

const Browser = () => (
  <aside className="w-[600px] text-[21px] text-[#333333]">
    <div className="flex h-[50px] items-center border-2 border-[#cccccc] bg-[#f1f1f1] pl-2">
      <button aria-label="Collapse browser">
        <svg className="h-3 w-5" viewBox="0 0 20 12"><path d="M10 0v12L0 6zM20 0v12l-10-6z" fill="#333333" /></svg>
      </button>
      <h2 className="ml-5 flex-1 text-[20px] text-[#666666]">BROWSER</h2>
      <button aria-label="Minimize browser"><RoundToggle /></button>
      <Grip />
    </div>

    <ul className="mt-[10px] space-y-2">
      <li className="flex h-10 items-center pl-8">
        <svg className="h-6 w-6" viewBox="0 0 24 24">
          <defs><linearGradient id="tri"><stop offset="0" stopColor="#eeeeee" /><stop offset="1" stopColor="#555555" /></linearGradient></defs>
          <path d="M2 23L23 2v21z" fill="url(#tri)" stroke="#222222" strokeWidth="2" />
        </svg>
        <div className="ml-4 flex h-10 items-center bg-[#f1f1f1] pr-4 pl-[6px]">
          <EyeIcon />
          <span className="ml-3 flex h-8 items-center bg-[#999999] pr-4 pl-[6px] text-[23px] font-bold text-white">
            <BlocksIcon />
            <span className="ml-7">LaserCutter_PCB v28</span>
          </span>
          <input type="radio" name="active" aria-label="Activate component" defaultChecked className="ml-2 size-[26px] appearance-none rounded-full border-2 border-[#333333] bg-[radial-gradient(#222222_5px,#ffffff_6px)]" />
        </div>
      </li>
      {TREE.map((node) => (
        <li key={node.label} className="flex h-10 items-center pl-[72px]">
          <svg className="h-[26px] w-[18px]" viewBox="0 0 18 26"><path d="M1 2h3l13 11L4 24H1z" fill="#f1f1f1" stroke="#333333" strokeWidth="2" /></svg>
          <div className="ml-[18px] flex h-10 items-center bg-[#f1f1f1] pr-[22px] pl-[6px]">
            {node.eye !== 'none' && <span className="mr-[18px]"><EyeIcon off={node.eye === 'off'} /></span>}
            {node.icon === 'gear' && <GearIcon />}
            {node.icon === 'folder' && <FolderIcon />}
            {node.icon === 'chip' && <SmallChip />}
            {node.icon === 'blocks' && <BlocksIcon />}
            <span className="ml-7">{node.label}</span>
          </div>
        </li>
      ))}
    </ul>
  </aside>
);

const NavBar = () => (
  <div className="flex h-12 items-center gap-5 bg-[#f1f1f1] pr-[6px] pl-[6px]">
    <button aria-label="Orbit" className="flex items-center gap-[10px]">
      <svg className="size-8" viewBox="0 0 32 32">
        <ellipse cx="16" cy="17" rx="15" ry="5" fill="none" stroke="#555555" strokeWidth="2" />
        <path d="M3 23l7-5v10z" fill="#111111" />
        <path d="M14 31V7h-2l4-6 4 6h-1v24z" fill="#ffffff" stroke="#222222" strokeWidth="2" />
      </svg>
      <Caret />
    </button>
    <button aria-label="Look at" className="-ml-2">
      <svg className="size-8" viewBox="0 0 32 32">
        <path d="M5 11l7-9 3 4 11-4v9z" fill="#8f94a3" stroke="#555b69" />
        <path d="M1 11h30v20H1z" fill="#ffffff" stroke="#3c414d" strokeWidth="2" />
        <path d="M7 17h18v8H7z" fill="#b2b5c2" stroke="#3c414d" strokeWidth="2" />
      </svg>
    </button>
    <button aria-label="Pan">
      <svg className="size-8" viewBox="0 0 32 32">
        <path d="M12 31l-4-7-7-7q1-3 4-1l5 4-4-14q2-4 4 0l3 9V3q2-3 4 0l1 11 2-10q2-3 4 0l-1 12 4-9q3-1 3 2l-3 13q-1 7-5 9z" fill="#f6f6fa" stroke="#3c414d" strokeWidth="2" strokeLinejoin="round" />
      </svg>
    </button>
    <button aria-label="Zoom">
      <svg className="size-8" viewBox="0 0 32 32">
        <path d="M18 21l8 8" stroke="#3c414d" strokeWidth="5" />
        <circle cx="11" cy="14" r="10" fill="#dfeeee" stroke="#3c414d" strokeWidth="2" />
        <path d="M27 0v10M22 5h10M22 13h10" stroke="#3c414d" strokeWidth="2" />
      </svg>
    </button>
    <button aria-label="Fit" className="flex items-center gap-[10px]">
      <svg className="size-8" viewBox="0 0 32 32">
        <path d="M22 22l8 8" stroke="#444444" strokeWidth="5" />
        <circle cx="13" cy="13" r="12" fill="#cde3e1" stroke="#555555" strokeWidth="2" />
        <path d="M7 7h12v12H7z" fill="#ffffff" stroke="#3c414d" strokeWidth="2" />
      </svg>
      <Caret />
    </button>
    <button aria-label="Display settings" className="-ml-2 flex items-center gap-1">
      <svg className="size-8" viewBox="0 0 32 32">
        <path d="M1 1h30v24H1z" fill="#ffffff" stroke="#444444" strokeWidth="2" />
        <path d="M5 5h22v16H5z" fill="#9fc0e6" stroke="#2f4a7a" strokeWidth="2" />
        <path d="M11 26h10l2 5H9z" fill="#ffffff" stroke="#444444" strokeWidth="2" />
      </svg>
      <Caret />
    </button>
    <button aria-label="Grid and snaps" className="-ml-[6px] flex items-center gap-1">
      <svg className="size-8" viewBox="0 0 32 32">
        <path d="M1 1h30v30H1z" fill="#f4f4f9" stroke="#444444" strokeWidth="2" />
        <path d="M7 1v30M13 1v30M19 1v30M25 1v30M1 7h30M1 13h30M1 19h30M1 25h30" stroke="#777b85" strokeWidth="2" />
      </svg>
      <Caret />
    </button>
    <button aria-label="Viewports" className="-ml-[6px] flex items-center gap-1">
      <svg className="size-8" viewBox="0 0 32 32">
        <path d="M1 3h29v25H1z" fill="#bcd4ec" stroke="#2f4a7a" strokeWidth="2" />
        <path d="M15 3v25M1 15h29" stroke="#2f4a7a" strokeWidth="2" />
        <path d="M5 7h6v4H5zM19 7h6v4h-6zM5 19h6v4H5zM19 19h6v4h-6z" fill="#9fc0e6" stroke="#7fa3cf" strokeWidth="2" />
      </svg>
      <Caret />
    </button>
  </div>
);

const CommentsBar = () => (
  <div className="flex h-[50px] w-[600px] items-center border-2 border-t-0 border-[#cccccc] bg-[#f1f1f1] pl-12">
    <h2 className="flex-1 text-[20px] text-[#666666]">COMMENTS</h2>
    <button aria-label="Expand comments"><RoundToggle plus /></button>
    <Grip />
  </div>
);

/* ---------- timeline ---------- */

const PLAYBACK = [
  { label: 'Go to start', d: 'M0 0h4v28H0zM24 0v28L4 14z' },
  { label: 'Step back', d: 'M18 0v28L0 14zM20 8h4v12h-4z' },
  { label: 'Play', d: 'M0 -2l24 16L0 30z' },
  { label: 'Step forward', d: 'M0 8h4v12H0zM6 0v28l18-14z' },
  { label: 'Go to end', d: 'M0 0v28l20-14zM20 0h4v28h-4z' },
];

const Picture = () => (
  <svg className="size-8" viewBox="0 0 32 32">
    <path d="M2 2h28v28H2z" fill="#7cc6fa" />
    <path d="M2 18l6-3 5 5 5-4 4 3 8-2v13H2z" fill="#3c92cc" />
    <circle cx="22" cy="10" r="4" fill="#fbf8c8" />
    <path d="M3 3h26v26H3z" fill="none" stroke="#3c92cc" strokeWidth="2" />
  </svg>
);

const Timeline = () => (
  <footer className="flex h-[95px] items-start border-t-4 border-[#cccccc] bg-[#f1f1f1] pl-[22px]">
    <div className="mt-8 flex gap-[26px]">
      {PLAYBACK.map((b) => (
        <button key={b.label} aria-label={b.label}>
          <svg className="h-8 w-6 overflow-visible" viewBox="0 -2 24 32"><path d={b.d} fill="#4d4d4d" /></svg>
        </button>
      ))}
    </div>
    <div className="mt-[30px] ml-[46px]">
      <div className="flex gap-4">
        <svg className="size-8" viewBox="0 0 32 32">
          <path d="M4 4h22v22H4z" fill="none" stroke="#555555" strokeWidth="2" />
          <path d="M-1 0h8v8h-8zM22 0h8v8h-8zM-1 22h8v8h-8zM20 16h10v14H16z" fill="#f1f1f1" />
          <path d="M0 1h5v5H0zM25 1h5v5h-5zM0 26h5v5H0z" fill="#1e8fe5" />
          <path d="M18 29l9-10" stroke="#f9c04a" strokeWidth="6" />
          <path d="M27 19l2-3" stroke="#f23f3f" strokeWidth="6" />
          <path d="M14 32l2-5 5 3z" fill="#666666" />
        </svg>
        <svg className="size-8" viewBox="0 0 32 32">
          <path d="M13 2h18v28H2V14h11z" fill="#5fd888" />
          <path d="M18 3h8v8h-8z" fill="#999999" />
          <path d="M1 20h14v4H1z" fill="#ffffff" />
          <path d="M0 18h5v6H0z" fill="#888888" />
          <path d="M17 9h11v12H17z" fill="#505050" />
        </svg>
        <svg className="size-8" viewBox="0 0 32 32">
          <path d="M1 9l7-8h23v22l-7 8H1z" fill="#dedede" />
          <path d="M24 9l7-8v22l-7 8z" fill="#b5b5b5" />
          <path d="M2 8l6-6h22l-6 6z" fill="#f5f5f5" />
          <path d="M1 9l7-8h23v22l-7 8H1z" fill="none" stroke="#555555" strokeWidth="2" />
        </svg>
        <Picture />
        <Picture />
      </div>
      <svg className="mt-[6px] ml-4 h-[14px] w-[196px]" viewBox="0 0 196 14">
        <path d="M2 0v12h192V0M49 0v12M97 0v12M145 0v12" fill="none" stroke="#cccccc" strokeWidth="4" />
      </svg>
    </div>
    <svg className="mt-[18px] -ml-1 h-16 w-6" viewBox="0 0 24 64"><path d="M0 0h24v10l-9 9v45h-4V19l-11-9z" fill="#666666" /></svg>
    <button aria-label="Timeline settings" className="mt-8 mr-[26px] ml-auto"><GearIcon /></button>
  </footer>
);

export default function App() {
  return (
    <div className="flex min-h-screen flex-col bg-white font-['Liberation_Sans',Arial,sans-serif]">
      <TitleBar />
      <TabBar />
      <Ribbon />
      <main className="relative flex flex-1 flex-col justify-between px-2 pt-2 pb-2">
        <Scene />
        <div className="relative"><Browser /></div>
        <div className="relative grid grid-cols-[1fr_auto_1fr] items-end">
          <CommentsBar />
          <NavBar />
          <button aria-label="Assistant" className="mr-4 mb-2 justify-self-end">
            <svg className="size-[30px]" viewBox="0 0 30 30">
              <path d="M15 0a15 15 0 0 0 0 30h15V15A15 15 0 0 0 15 0z" fill="#3c3c3c" />
              <path d="M9 22l5-14h3l5 14M12 18l7 3" fill="none" stroke="#ffffff" strokeWidth="3" />
            </svg>
          </button>
        </div>
      </main>
      <Timeline />
    </div>
  );
}
